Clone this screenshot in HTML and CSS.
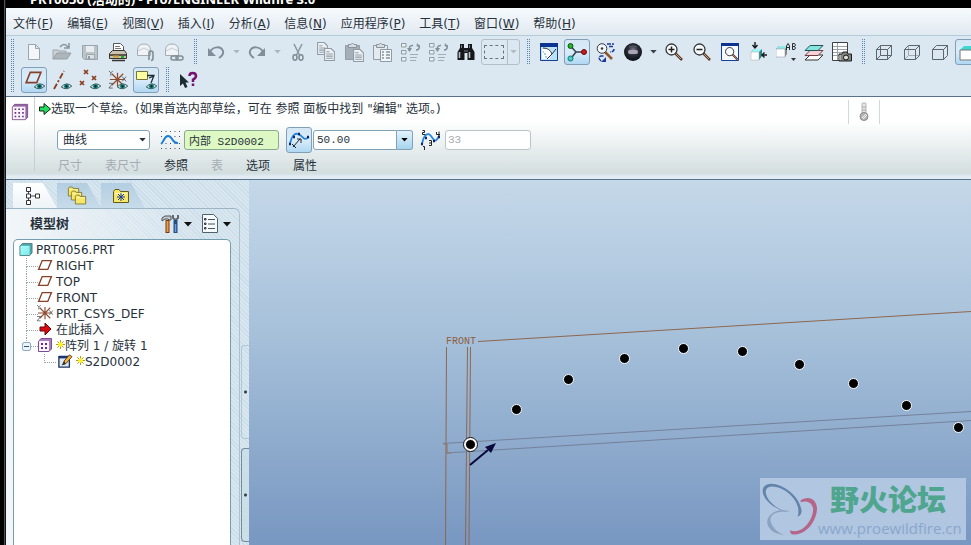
FILE: index.html
```html
<!DOCTYPE html>
<html lang="zh-CN">
<head>
<meta charset="utf-8">
<title>PRT0056 (活动的) - Pro/ENGINEER Wildfire 3.0</title>
<link rel="stylesheet" href="styles.css">
</head>
<body>
<svg class="defs" aria-hidden="true">
  <defs>
    <linearGradient id="blueGlass" x1="0" y1="0" x2="1" y2="1"><stop offset="0" stop-color="#aff"/><stop offset="1" stop-color="#7ee6e6"/></linearGradient>
    <radialGradient id="ball" cx=".5" cy=".4" r=".6"><stop offset="0" stop-color="#8a8494"/><stop offset=".45" stop-color="#2b303b"/><stop offset="1" stop-color="#0a0e12"/></radialGradient>
    <symbol id="eye" viewBox="0 0 12 8"><path d="M0 4.500Q6-2 12 3.500Q6 9 0 4.500Z" fill="#cfe4e4" stroke="#26484a" stroke-width="1"/><circle cx="6" cy="3.800" r="2.800" fill="#147a76"/><circle cx="6" cy="3.800" r="1.200" fill="#022"/></symbol>
    <symbol id="tri" viewBox="0 0 8 5"><path d="M0 0H8L4 4.500Z" fill="currentColor"/></symbol>
    <symbol id="page" viewBox="0 0 20 20"><path d="M4.500 2.500H11.500L15.500 6.500V17.500H4.500Z M11.500 2.500V6.500H15.500" fill="#f4f7fa" stroke="#9ba5ae"/></symbol>
    <symbol id="open" viewBox="0 0 20 20"><path d="M1 17V8H6L7 9H14V11" fill="#ccd2d6" stroke="#9ba5ae"/><path d="M1 17L5 11H19L15 17Z" fill="#aeb6bc" stroke="#959fa6"/><path d="M8 5Q12 0 16 5M17 1V6H12" fill="none" stroke="#89949c" stroke-width="1.500"/></symbol>
    <symbol id="save" viewBox="0 0 20 20"><path d="M2.500 3.500H17.500V17.500H4.500L2.500 15.500Z" fill="#bcc4ca" stroke="#9aa4ab"/><path d="M6 4H14V10H6Z" fill="#e8edf0"/><path d="M6.500 12.500H14.500V17H6.500Z" fill="#dde3e7" stroke="#9aa4ab"/><path d="M8 14H10V17H8Z" fill="#929ca3"/></symbol>
    <symbol id="print" viewBox="0 0 20 20"><path d="M5.500 9V1.500H12.500L15.500 4.500V9" fill="#fff" stroke="#555"/><path d="M7 4.500H12M7 6.500H13" stroke="#777"/><path d="M1.500 11.500L4.500 8.500H16.500L18.500 11.500V16.500H1.500Z" fill="#c9c3b4" stroke="#38332d"/><path d="M2 13H18M4 18.500H17" stroke="#38332d" stroke-width="1.500"/><path d="M13 14H16V16H13Z" fill="#2a2"/><path d="M5 14.500H11" stroke="#c8a23a" stroke-width="2"/></symbol>
    <symbol id="mail" viewBox="0 0 20 20"><path d="M1.500 13.500V8Q2 2 8 2Q14 2 14.500 8V13.500Z" fill="#f1f4f7" stroke="#a4adb4"/><path d="M2 9L8 6L14 9" fill="none" stroke="#c4cbd0"/></symbol>
    <symbol id="undo" viewBox="0 0 20 20"><path d="M4 10C7 4 15 4 17 9Q18 13 13 16" fill="none" stroke="#818d98" stroke-width="2"/><path d="M2 6V14H10Z" fill="#818d98"/></symbol>
    <symbol id="cut" viewBox="0 0 20 20"><path d="M6 2L11.500 13M14 2L8.500 13" stroke="#8d98a1" stroke-width="1.600"/><ellipse cx="7" cy="15.500" rx="2" ry="2.700" fill="none" stroke="#808b93" stroke-width="1.500"/><ellipse cx="13" cy="15.500" rx="2" ry="2.700" fill="none" stroke="#808b93" stroke-width="1.500"/></symbol>
    <symbol id="doc" viewBox="0 0 12 12"><path d="M1.500 .500H7.500L10.500 3.500V11.500H1.500Z" fill="#eef2f5" stroke="#8f9ba4"/><path d="M3 3.500H6M3 5.500H9M3 7.500H9M3 9.500H9" stroke="#8f9ba4"/></symbol>
    <symbol id="copy" viewBox="0 0 20 20"><use href="#doc" x="0" y="0" width="13" height="13"/><use href="#doc" x="7" y="6" width="13" height="13"/></symbol>
    <symbol id="board" viewBox="0 0 20 20"><path d="M1.500 3.500H15.500V17.500H1.500Z" fill="currentColor" stroke="#929da5"/><path d="M4.500 5.500V2.500H7Q8.500-.500 10 2.500H12.500V5.500Z" fill="#d7dde2" stroke="#89949c"/></symbol>
    <symbol id="paste" viewBox="0 0 20 20"><use href="#board" width="20" height="20" color="#a5afb7"/><use href="#doc" x="8" y="7" width="13" height="13"/></symbol>
    <symbol id="pastes" viewBox="0 0 20 20"><use href="#board" width="20" height="20" color="#e3eaf0"/><path d="M8.500 7.500H19.500V19.500H8.500Z" fill="#f3f6f8" stroke="#8f9ba4"/><path d="M10 10H12M10 13H12M10 16H12M14 10H18M14 13H18M14 16H18" stroke="#86929b" stroke-width="1.500"/></symbol>
    <symbol id="regen" viewBox="0 0 20 20"><path d="M1.500 1.500H6V5H1.500ZM1.500 8.500H6V12H1.500ZM1.500 15.500H6V19H1.500Z" fill="#e9eef2" stroke="#909ba3"/><path d="M10 12.500H18M10 15.500H17M10 18.500H16" stroke="#a2acb4"/><path d="M9.500 9Q8.500 3 13 3.500M19 3Q20 8 16 8" fill="none" stroke="#858f98" stroke-width="1.500"/><path d="M7 6H12L9.500 10ZM16.500 4L21 6L17 1Z" fill="#858f98"/></symbol>
    <symbol id="find" viewBox="0 0 20 20"><path d="M4 2H8V6H12V2H16V6L18.500 10V18H11.500V11H8.500V18H1.500V10L4 6Z" fill="#15181b"/><path d="M3.500 10V16M13.500 10V16" stroke="#b8bec4" stroke-width="1.600"/><path d="M5.500 3V6M13.500 3V6M8 9H12" stroke="#767e85"/></symbol>
    <symbol id="repaint" viewBox="0 0 20 20"><path d="M1.500 1.500H18.500V18.500H1.500Z" fill="#b9e2f6" stroke="#173f94"/><path d="M1 1H19V5H1Z" fill="#0d3390"/><path d="M3 7L9 6L14 11L10 17L3 17Z" fill="#fff"/><path d="M4 6Q11 6 13 12M8 17L13 12L17 7" fill="none" stroke="#2b3136"/><path d="M5 12H7M6 15H8M4 10H5" stroke="#58a2ce"/></symbol>
    <symbol id="spin" viewBox="0 0 20 20"><path d="M3.500 4L9 10L3.500 17M9 10H17" fill="none" stroke="#35414c" stroke-width="1.500"/><circle cx="3.500" cy="4" r="2.500" fill="#25b327" stroke="#115813"/><circle cx="3.500" cy="16.500" r="2.500" fill="#45cfc6" stroke="#167670"/><circle cx="17" cy="10" r="2.500" fill="#ca1b20" stroke="#6b080b"/></symbol>
    <symbol id="orient" viewBox="0 0 20 20"><path d="M10 10L17 17" stroke="#91582e" stroke-width="2.500"/><circle cx="7" cy="6.500" r="4.800" fill="#f0f6fa" stroke="#343a40"/><circle cx="7" cy="6.500" r="1.200" fill="#333"/><path d="M12 2H19M14 4.500H19M19 7Q19 10 15 10M6 19Q2 15 6 14H9" fill="none" stroke="#1b3b96" stroke-width="1.500" stroke-dasharray="4 1"/><path d="M6 20H11V15Z" fill="#1b3b96"/></symbol>
    <symbol id="sphere" viewBox="0 0 20 20"><circle cx="10" cy="10" r="9" fill="url(#ball)"/><rect x="5" y="8" width="10" height="4" rx="2" fill="#aaa6b5"/><path d="M6 5Q10 3 14 5" stroke="#586169" fill="none"/></symbol>
    <symbol id="lens" viewBox="0 0 20 20"><path d="M11 11L18 18" stroke="#543829" stroke-width="2.500"/><path d="M11 11L17 17" stroke="#d49a77"/><circle cx="7.500" cy="7.500" r="5.500" fill="#f8fbfc" stroke="#33383c" stroke-width="1.300"/></symbol>
    <symbol id="zin" viewBox="0 0 20 20"><use href="#lens" width="20" height="20"/><path d="M4.500 7.500H10.500M7.500 4.500V10.500" stroke="#222" stroke-width="1.500"/></symbol>
    <symbol id="zout" viewBox="0 0 20 20"><use href="#lens" width="20" height="20"/><path d="M4.500 7.500H10.500" stroke="#222" stroke-width="1.500"/></symbol>
    <symbol id="refit" viewBox="0 0 20 20"><path d="M1.500 1.500H18.500V18.500H1.500Z" fill="#f5faff" stroke="#173f94"/><path d="M1 1H19V4H1Z" fill="#0d3390"/><use href="#lens" x="4" y="4" width="15" height="15"/></symbol>
    <symbol id="viewcube" viewBox="0 0 20 20"><path d="M3 10L6 7H14V14L11 18H3Z" fill="#2a8785"/><path d="M3 10L6 7H14L11 10Z" fill="#9ff5f5"/><path d="M3 10H11V18H3Z" fill="#fff" stroke="#aaa" stroke-width=".500"/><path d="M7 0V5M4.500 3L7 6L9.500 3M19 13H14M16.500 10.500L14 13L16.500 15.500" fill="none" stroke="#16191b" stroke-width="1.400"/></symbol>
    <symbol id="saved" viewBox="0 0 20 20"><path d="M0 7L3 4H11V12L9 15H0Z" fill="#888"/><path d="M0 7L3 4H11L9 7Z" fill="#91e8e8"/><path d="M0 7H9V15H0Z" fill="#fff" stroke="#889" stroke-width=".500"/><path d="M10.500 8V4L12 1.500L13.500 4V8M10.500 5.500H13.500M16.500 1.500H18.500L19.500 3L18.500 4.500H16.500ZM16.500 4.500H18.500L19.500 6L18.500 7.500H16.500Z" fill="none" stroke="#252a2e"/><path d="M15 16H20L17.500 19Z" fill="#333"/></symbol>
    <symbol id="layers" viewBox="0 0 20 20"><path d="M1 18L6 13H19L14 18Z" fill="#fff" stroke="#333"/><path d="M1 13.500L6 8.500H19L14 13.500Z" fill="#f6d1d7" stroke="#703c48"/><path d="M1 8.500L6 3.500H19L14 8.500Z" fill="#86e6df" stroke="#205553"/></symbol>
    <symbol id="report" viewBox="0 0 20 20"><path d="M.500 .500H15.500V18.500H.500Z" fill="#fff" stroke="#3c4146"/><path d="M1 4.500H15M1 7.500H15M1 10.500H15M1 13.500H15M5.500 1V18" stroke="#9ba1a6"/><path d="M7 12H10L11 10H15L16 12H19.500V19H7Z" fill="#82857f" stroke="#1e2020"/><circle cx="14" cy="15.500" r="2.500" fill="#ddd" stroke="#111"/><path d="M8 13V18" stroke="#ddd"/></symbol>
    <symbol id="wire" viewBox="0 0 20 20"><path d="M2.500 7.500H13.500V17.500H2.500ZM2.500 7.500L6.500 3.500H17.500V13.500L13.500 17.500M13.500 7.500L17.500 3.500M6.500 3.500V13.500H17.500M2.500 17.500L6.500 13.500" fill="none" stroke="#5d656d"/></symbol>
    <symbol id="hidden" viewBox="0 0 20 20"><path d="M6.500 4V13.500H17M3 17L6.500 13.500" fill="none" stroke="#a2abb2"/><path d="M2.500 7.500H13.500V17.500H2.500ZM2.500 7.500L6.500 3.500H17.500V13.500L13.500 17.500M13.500 7.500L17.500 3.500" fill="none" stroke="#5d656d"/></symbol>
    <symbol id="nohid" viewBox="0 0 20 20"><path d="M2.500 7.500H13.500V17.500H2.500ZM2.500 7.500L6.500 3.500H17.500V13.500L13.500 17.500M13.500 7.500L17.500 3.500" fill="none" stroke="#5d656d"/></symbol>
    <symbol id="shade" viewBox="0 0 20 20"><path d="M2 8L6 4H18L14 8Z" fill="#42d6d1"/><path d="M2 8H14V18H2Z" fill="#fff" stroke="#777"/></symbol>
    <symbol id="plane" viewBox="0 0 20 14"><path d="M6.500 1.500H18L13.500 12.500H2Z" fill="none" stroke="#854129" stroke-width="1.700"/></symbol>
    <symbol id="csys" viewBox="0 0 20 20"><path d="M10 3V17M2 10H18M4 4L16 16M16 4L4 16" stroke="#8b4d2d" stroke-width="1.300"/><path d="M1 1L3 3L5 1M3 3V6M15 7L19 12M19 7L15 12M1 14H5L1 19H5" fill="none" stroke="#5e6468"/></symbol>
    <symbol id="pattern" viewBox="0 0 20 20"><path d="M1.500 4.500L4 1.500H18.500V16L16 18.500H1.500Z" fill="#9366a5" stroke="#7c4e8f"/><path d="M2 4H16V18H2Z" fill="#fbf2ff"/><path d="M4 7H15M4 11H15M4 15H15" stroke="#61347a" stroke-width="1.800" stroke-dasharray="1.800 2.400"/></symbol>
    <symbol id="pattern4" viewBox="0 0 14 14"><path d="M.500 3.500L3 .500H13.500V11L11 13.500H.500Z" fill="#a87fb8" stroke="#7c4e8f"/><path d="M1 3H11V13H1Z" fill="#fbf2ff"/><path d="M3 6H5M7 6H9M3 10H5M7 10H9" stroke="#61347a" stroke-width="2"/></symbol>
    <symbol id="curve" viewBox="0 0 20 20"><path d="M1 1.500H20M1 6.500H20M1 13.500H20M1 18.500H20" stroke="#4a4e62" stroke-dasharray="1 3.500"/><path d="M1 14C4 12 4 6 8 6C13 6 12 14 18 13" fill="none" stroke="#1e7fd3" stroke-width="2"/></symbol>
    <symbol id="folder" viewBox="0 0 18 16"><path d="M1.500 14.500V3.500L3 1.500H7L8.500 3.500H16.500V14.500Z" fill="#f6e767" stroke="#665a18"/><path d="M3 5.500H15" stroke="#fffbc4"/></symbol>
    <symbol id="star" viewBox="0 0 10 10"><path d="M5 0V10M0 5H10M1.500 1.500L8.500 8.500M8.500 1.500L1.500 8.500" stroke="#a39400" stroke-width="1"/><circle cx="5" cy="5" r="2.500" fill="#ffef29"/></symbol>
  </defs>
</svg>

<div class="app">
  <header class="titlebar"><h1>PRT0056 (活动的) - Pro/ENGINEER Wildfire 3.0</h1></header>

  <nav class="menubar" aria-label="主菜单">
    <button>文件(<u>F</u>)</button><button>编辑(<u>E</u>)</button><button>视图(<u>V</u>)</button><button>插入(<u>I</u>)</button><button>分析(<u>A</u>)</button><button>信息(<u>N</u>)</button><button>应用程序(<u>P</u>)</button><button>工具(<u>T</u>)</button><button>窗口(<u>W</u>)</button><button>帮助(<u>H</u>)</button>
  </nav>

  <div class="toolbar">
    <i class="grip tall"></i>
    <div class="rows">
      <div class="row">
        <button class="tool" aria-label="新建"><svg><use href="#page"/></svg></button>
        <button class="tool" aria-label="打开"><svg><use href="#open"/></svg></button>
        <button class="tool" aria-label="保存"><svg><use href="#save"/></svg></button>
        <button class="tool" aria-label="打印"><svg><use href="#print"/></svg></button>
        <button class="tool" aria-label="发送邮件"><svg viewBox="0 0 20 20"><use href="#mail" width="20" height="20"/><path d="M13 18V11Q13 9 15 9Q17 9 17 11V16Q17 18.500 15 18.500" fill="none" stroke="#828d95" stroke-width="1.600"/></svg></button>
        <button class="tool" aria-label="发送链接"><svg viewBox="0 0 20 20"><use href="#mail" width="20" height="20"/><rect x="7" y="14" width="7" height="4" rx="2" fill="none" stroke="#828d95" stroke-width="1.500"/><rect x="12" y="14" width="7" height="4" rx="2" fill="none" stroke="#828d95" stroke-width="1.500"/></svg></button>
        <i class="grip"></i>
        <button class="tool" aria-label="撤消"><svg><use href="#undo"/></svg></button>
        <button class="drop dim" aria-label="撤消列表"><svg><use href="#tri"/></svg></button>
        <button class="tool flip" aria-label="重做"><svg><use href="#undo"/></svg></button>
        <button class="drop dim" aria-label="重做列表"><svg><use href="#tri"/></svg></button>
        <button class="tool" aria-label="剪切"><svg><use href="#cut"/></svg></button>
        <button class="tool" aria-label="复制"><svg><use href="#copy"/></svg></button>
        <button class="tool" aria-label="粘贴"><svg><use href="#paste"/></svg></button>
        <button class="tool" aria-label="选择性粘贴"><svg><use href="#pastes"/></svg></button>
        <button class="tool" aria-label="再生"><svg><use href="#regen"/></svg></button>
        <button class="tool" aria-label="再生管理器"><svg><use href="#regen"/></svg></button>
        <button class="tool" aria-label="查找"><svg><use href="#find"/></svg></button>
        <button class="pick" aria-label="选取框"><span class="marquee"></span><span class="arrow"><svg><use href="#tri"/></svg></span></button>
        <i class="grip"></i>
        <button class="tool" aria-label="重画"><svg><use href="#repaint"/></svg></button>
        <button class="tool on" aria-label="旋转中心"><svg><use href="#spin"/></svg></button>
        <button class="tool" aria-label="定向模式"><svg><use href="#orient"/></svg></button>
        <button class="tool" aria-label="外观库"><svg><use href="#sphere"/></svg></button>
        <button class="drop" aria-label="外观列表"><svg><use href="#tri"/></svg></button>
        <button class="tool" aria-label="放大"><svg><use href="#zin"/></svg></button>
        <button class="tool" aria-label="缩小"><svg><use href="#zout"/></svg></button>
        <button class="tool" aria-label="重新调整"><svg><use href="#refit"/></svg></button>
        <button class="tool" aria-label="重定向"><svg><use href="#viewcube"/></svg></button>
        <button class="tool" aria-label="已保存视图"><svg><use href="#saved"/></svg></button>
        <button class="tool" aria-label="层"><svg><use href="#layers"/></svg></button>
        <button class="tool" aria-label="视图管理器"><svg><use href="#report"/></svg></button>
        <i class="grip"></i>
        <button class="tool" aria-label="线框"><svg><use href="#wire"/></svg></button>
        <button class="tool" aria-label="隐藏线"><svg><use href="#hidden"/></svg></button>
        <button class="tool" aria-label="无隐藏线"><svg><use href="#nohid"/></svg></button>
        <button class="tool on" aria-label="着色"><svg><use href="#shade"/></svg></button>
      </div>
      <div class="row">
        <button class="tool on" aria-label="基准平面"><svg viewBox="0 0 20 20"><use href="#plane" y="1" width="19" height="13"/><use href="#eye" x="10" y="13" width="11" height="7"/></svg></button>
        <button class="tool" aria-label="基准轴"><svg viewBox="0 0 20 20"><path d="M2 19L12 1" stroke="#8a3d21" stroke-width="1.800" stroke-dasharray="6 2 2 2"/><use href="#eye" x="9" y="13" width="11" height="7"/></svg></button>
        <button class="tool" aria-label="基准点"><svg viewBox="0 0 20 20"><path d="M4 0L8 4M8 0L4 4M0 11L4 15M4 11L0 15M12 6L16 10M16 6L12 10" stroke="#8a3d21" stroke-width="1.700"/><use href="#eye" x="10" y="13" width="11" height="7"/></svg></button>
        <button class="tool" aria-label="坐标系"><svg viewBox="0 0 20 20"><use href="#csys" width="19" height="19"/><use href="#eye" x="9" y="13" width="11" height="7"/></svg></button>
        <button class="tool on" aria-label="注释"><svg viewBox="0 0 20 20"><path d="M.500 1.500H11.500V9.500H.500Z" fill="#ffffa0" stroke="#77723e"/><path d="M11 5.500H18L15 13M13 8L18 6" fill="none" stroke="#222b30" stroke-width="1.300"/><use href="#eye" x="10" y="13" width="11" height="7"/></svg></button>
        <i class="grip"></i>
        <button class="tool" aria-label="帮助"><svg viewBox="0 0 20 20"><path d="M2 4V16L5 13.500L7 18L9.500 17L7.500 12.500H11Z" fill="#1b2c34"/><path d="M11.500 6Q11.500 3 14.500 3Q18 3 18 6Q18 8 15 9.500V12M15 13.500V16" fill="none" stroke="#75126f" stroke-width="2.500"/></svg></button>
      </div>
    </div>
  </div>

  <section class="dashboard">
    <div class="feature"><svg><use href="#pattern"/></svg></div>
    <div class="dash">
      <p class="message"><svg viewBox="0 0 12 12"><path d="M.500 4H5V.500L11.500 6L5 11.500V8H.500Z" fill="#24dc60" stroke="#0c2915"/></svg>选取一个草绘。(如果首选内部草绘，可在 参照 面板中找到 "编辑" 选项。)</p>
      <div class="fields">
        <div class="select"><select aria-label="阵列类型"><option>曲线</option></select><svg><use href="#tri"/></svg></div>
        <svg class="fig"><use href="#curve"/></svg>
        <input class="ref" aria-label="草绘参照" value="内部 S2D0002">
        <button class="tool on" aria-label="成员间距"><svg viewBox="0 0 20 20"><path d="M1 14C3 4 7 2 11 5S15 11 20 7" fill="none" stroke="#2587dc" stroke-width="1.800"/><path d="M0 14H2M4 7H6M9 4H11M18 7H20" stroke="#15236b" stroke-width="2.500"/><path d="M4 17L11 9M8 9H12V13M3 14L7 18" fill="none" stroke="#222"/></svg></button>
        <div class="combo"><input aria-label="间距" value="50.00"><button aria-label="间距列表"><svg><use href="#tri"/></svg></button></div>
        <svg class="fig" viewBox="0 0 20 20"><path d="M1 14C3 4 7 2 10 6S14 14 18 6" fill="none" stroke="#2587dc" stroke-width="1.800"/><path d="M0 14H2M4 8H6M12 11H14M17 7H19" stroke="#15236b" stroke-width="2.500"/><path d="M1.500 .500H3.500V2.500H1.500V4.500H4M2 16.500H3.500V20M8 10.500H10.500V15.500H8M8 13H10M15.500 2V4.500H19M18 1.500V7" fill="none" stroke="#222"/></svg>
        <input class="count" aria-label="成员数" value="33" disabled>
      </div>
      <div class="slide">
        <button disabled>尺寸</button><button disabled>表尺寸</button><button>参照</button><button disabled>表</button><button>选项</button><button>属性</button>
      </div>
    </div>
    <div class="thermo"><svg viewBox="0 0 12 20"><path d="M4 1.500Q6 0 8 1.500V11H4Z" fill="#e5e5e5" stroke="#b5b5b5"/><path d="M4 5H8M4 8H8" stroke="#aaa"/><circle cx="6" cy="14.500" r="4" fill="#b7b7b7" stroke="#888"/><path d="M4 16L8 12M5 17L9 13" stroke="#eee"/></svg></div>
  </section>

  <main class="work">
    <aside class="navigator">
      <div class="tabs">
        <button class="tab cur" aria-label="模型树"><svg viewBox="0 0 18 20"><path d="M4.500 5V15M6 10H12" stroke="#444"/><path d="M2.500 1.500H6.500V5.500H2.500ZM2.500 8H6.500V12H2.500ZM2.500 14.500H6.500V18.500H2.500ZM11.500 8H15.500V12H11.500Z" fill="#fff" stroke="#333"/></svg></button>
        <button class="tab" aria-label="文件夹浏览器"><svg viewBox="0 0 20 20"><use href="#folder" width="13" height="11"/><use href="#folder" x="3" y="4" width="13" height="11"/><use href="#folder" x="7" y="8" width="13" height="11"/></svg></button>
        <button class="tab" aria-label="收藏夹"><svg viewBox="0 0 18 16"><use href="#folder" width="18" height="16"/><path d="M9 5V13M5 9H13M6 6L12 12M12 6L6 12" stroke="#1d3f9c"/></svg></button>
      </div>
      <div class="pane">
        <div class="head">
          <h2>模型树</h2>
          <button aria-label="设置"><svg viewBox="0 0 20 20"><path d="M1 7V4L4 2H10V6H8L7 5H4Z" fill="#c4cacd" stroke="#4d5459"/><path d="M6.500 6V19" stroke="#7a3b0f" stroke-width="4"/><path d="M6.500 7V18" stroke="#ef9a42" stroke-width="2"/><path d="M12 1V4L14.500 6L17 4V1" fill="none" stroke="#60696f" stroke-width="2"/><path d="M14.500 6V19" stroke="#244c86" stroke-width="4"/><path d="M14.500 10V18" stroke="#6d9ddb" stroke-width="1.500"/></svg><svg class="caret"><use href="#tri"/></svg></button>
          <button aria-label="显示"><svg viewBox="0 0 20 20"><path d="M2.500 .500H13.500L17.500 4.500V18.500H2.500Z" fill="#f5fafd" stroke="#52616c"/><path d="M8 5.500H15M8 10H15M8 14.500H15" stroke="#49545c"/><path d="M4.500 4.500H6V6H4.500ZM4.500 9H6V10.500H4.500ZM4.500 13.500H6V15H4.500Z" fill="none" stroke="#333"/></svg><svg class="caret"><use href="#tri"/></svg></button>
        </div>
        <ul class="tree">
          <li class="root"><svg viewBox="0 0 14 14"><path d="M.500 3.500L3 .500H13.500V10.500L11 13.500H.500Z" fill="#4ba5a8" stroke="#4f7b80"/><path d="M1 3H11V13H1Z" fill="url(#blueGlass)"/></svg>PRT0056.PRT
            <ul>
              <li><svg><use href="#plane"/></svg>RIGHT</li>
              <li><svg><use href="#plane"/></svg>TOP</li>
              <li><svg><use href="#plane"/></svg>FRONT</li>
              <li><svg viewBox="2 2 16 16"><use href="#csys" width="20" height="20"/></svg>PRT_CSYS_DEF</li>
              <li><svg viewBox="0 0 16 14"><path d="M3 5H8V1L14 7L8 13V9H3Z" fill="#d80d12" stroke="#64080b"/></svg>在此插入</li>
              <li class="last"><button class="fold" aria-label="折叠"></button><svg><use href="#pattern4"/></svg><svg class="star"><use href="#star"/></svg>阵列 1 / 旋转 1
                <ul><li class="last"><svg viewBox="0 0 16 16"><path d="M1 3H13V15H1Z" fill="#dce9f0" stroke="#1f315e" stroke-width="1.500"/><path d="M1 2H13V5H1Z" fill="#173472"/><path d="M6 12L7 8L13 1L16 3L9 11Z" fill="#f3b640" stroke="#533015"/><path d="M4 13L7 8L9 11Z" fill="#333"/></svg><svg class="star"><use href="#star"/></svg>S2D0002</li></ul>
              </li>
            </ul>
          </li>
        </ul>
      </div>
      <div class="sashes"><i></i><i class="dark"></i></div>
    </aside>

    <div class="canvas">
      <svg class="model" aria-label="图形窗口">
        <g transform="translate(-249 -180)" fill="none">
          <path d="M478 341.500L971 311.500M446.500 347L445.500 545M467.500 347L465.500 545M470.500 347L469 545" stroke="#8e674f"/>
          <path d="M443 443.500L971 411.500M446 453L971 420.500" stroke="#75819b"/>
          <path d="M443 444H447V453H451" stroke="#94735f"/>
          <text x="446" y="344" class="label">FRONT</text>
          <path d="M470 465L488 450" stroke="#09083c" stroke-width="2"/><path d="M496 443L485 447L491 453Z" fill="#09083c"/>
          <circle cx="470.500" cy="444.500" r="7" fill="#fff" stroke="#111"/>
          <g fill="#000" stroke="#fff">
            <circle cx="470.500" cy="444.500" r="5"/><circle cx="516.500" cy="409.500" r="5"/><circle cx="568.500" cy="379.500" r="5"/><circle cx="624.500" cy="358.500" r="5"/><circle cx="683.500" cy="348.500" r="5"/><circle cx="742.500" cy="351.500" r="5"/><circle cx="799.500" cy="364.500" r="5"/><circle cx="853.500" cy="383.500" r="5"/><circle cx="906.500" cy="405.500" r="5"/><circle cx="958.500" cy="427.500" r="5"/>
          </g>
        </g>
      </svg>
      <div class="mark">
        <svg viewBox="0 0 60 62"><g stroke="none"><path d="M28 34C9 30-1 15 4 8C12-2 41 13 43 33Q43 37 39 39Q42 28 33 18C24 8 8 4 6 12C5 19 14 30 28 34Z" fill="#6384aa"/><path d="M42 22C50 17 58 20 59 30C59 44 46 60 33 57Q31 56 31 53C44 58 55 42 55 31C54 24 48 22 42 24Z" fill="#b56688"/><path d="M31 34C19 32 9 36 11 44Q14 54 25 58C7 56 4 43 11 37C17 31 26 31 31 34Z" fill="#8ba2c1"/></g></svg>
        <div><strong>野火论坛</strong><span>www.proewildfire.cn</span></div>
      </div>
    </div>
  </main>
</div>
</body>
</html>
```
FILE: styles.css
```css
* { box-sizing: border-box; }
body {
  margin: 0;
  background: #000;
  color: #27313b;
  font: 12px/16px "DejaVu Sans", "Noto Sans CJK SC", sans-serif;
}
button, input, select { font: inherit; color: inherit; margin: 0; padding: 0; border: 0; background: none; }
h1, h2, p, ul { margin: 0; padding: 0; }
ul { list-style: none; }
svg { flex: none; }
.defs { position: absolute; width: 0; height: 0; }

.app {
  height: 100vh;
  padding-left: 6px;
  display: flex;
  flex-direction: column;
  overflow: hidden;
  background: linear-gradient(90deg, #000 4px, #4c5058 4px, #4c5058 5px, #10141a 5px);
}
.titlebar { height: 8px; flex: none; background: #000; display: flex; align-items: flex-end; padding: 0 24px; overflow: hidden; }
.titlebar h1 { color: #fff; font: bold 13px/14px "Noto Sans", "Noto Sans CJK SC", sans-serif; padding-bottom: 2px; white-space: nowrap; }

.menubar {
  flex: none;
  height: 28px;
  display: flex;
  align-items: center;
  padding-top: 5px;
  background: linear-gradient(#f6fafd, #e1e9f1);
  border-bottom: 1px solid #b4cbdc;
}
.menubar button { padding: 0 7px; white-space: nowrap; }

.toolbar { flex: none; display: flex; height: 61px; background: #dce8f1; border-bottom: 1px solid #56728c; overflow: hidden; }
.rows { display: flex; flex-direction: column; padding-top: 2px; }
.row { display: flex; align-items: center; height: 28px; }
.tool { flex: none; width: 26px; height: 26px; margin: 0 1px; border: 1px solid transparent; border-radius: 3px; display: grid; place-items: center; }
.tool svg { width: 20px; height: 20px; overflow: visible; }
.tool.on { border-color: #829fb8; background: linear-gradient(#d5e6f4, #d9ecfa 50%, #b0d7f3); }
.flip svg { transform: scaleX(-1); }
.grip { flex: none; width: 14px; height: 26px; background: conic-gradient(#5f84b2 25%, transparent 0) 0 0 / 2px 2px content-box; padding: 0 5px; }
.grip.tall { height: 54px; margin-top: 3px; padding: 0 6px 0 4px; }
.drop { flex: none; width: 13px; display: grid; place-items: center; color: #36424d; }
.drop svg { width: 7px; height: 4px; }
.dim { color: #a9b5c0; }
.pick { flex: none; width: 39px; height: 26px; margin: 0 1px; border: 1px solid #b3bfca; border-radius: 3px; display: flex; align-items: center; color: #b0bac3; }
.marquee { width: 20px; height: 14px; margin: 0 3px 0 2px; border: 1px dashed #68737d; }
.arrow { flex: 1; height: 24px; border-left: 1px solid #b3bfca; display: grid; place-items: center; }
.arrow svg { width: 7px; height: 4px; }

.dashboard { flex: none; height: 83px; display: flex; background: linear-gradient(#fff 30%, #d3dedf 93%, #d5e2e8 94%, #e2ecf2 97%); border-bottom: 1px solid #58748c; }
.feature { width: 29px; height: 74px; padding: 5px; border-right: 1px solid #c6cfd4; }
.feature svg { width: 18px; height: 20px; }
.dash { flex: 1; }
.message { display: flex; align-items: center; height: 24px; padding-left: 4px; white-space: pre; font-family: "DejaVu Sans", "Noto Sans CJK SC", sans-serif; }
.message svg { width: 12px; height: 12px; }
.fields { display: flex; align-items: center; height: 38px; padding-left: 22px; }
.fields input, .fields select { height: 20px; border: 1px solid #7fa2b8; border-radius: 3px; background: #fff; padding: 0 4px; min-width: 0; }
.fields input { font: 11px/16px "Liberation Mono", "Noto Sans CJK SC", monospace; }
.select { display: grid; width: 93px; align-items: center; }
.select select { grid-area: 1 / 1; appearance: none; width: 100%; padding-left: 5px; }
.select svg { grid-area: 1 / 1; justify-self: end; margin-right: 4px; width: 7px; height: 4px; pointer-events: none; }
.fig { width: 20px; height: 20px; margin: 0 4px 0 10px; overflow: visible; }
.fields .ref { width: 95px; background: #ddf8c3; border-color: #86ab90; }
.fields .tool { margin: 0 1px 0 7px; }
.combo { display: flex; width: 100px; }
.combo input { flex: 1; border-radius: 3px 0 0 3px; padding-left: 3px; }
.combo button { width: 16px; border: 1px solid #7fa2b8; border-left: 0; border-radius: 0 3px 3px 0; background: linear-gradient(#e3f3fd, #a7d3ed); display: grid; place-items: center; color: #000; }
.combo svg { width: 7px; height: 4px; }
.combo + .fig { margin-left: 8px; }
.fields .count { width: 86px; color: #a5abb0; border-color: #b9c5c9; padding-left: 2px; }
.slide { display: flex; gap: 23px; padding: 0 23px; height: 14px; align-items: center; }
.slide button:disabled { color: #a3adb2; }
.thermo { width: 32px; height: 24px; margin: 3px 91px 0 0; border: solid #d4d8da; border-width: 0 1px; display: grid; place-items: center; }
.thermo svg { width: 12px; height: 20px; }

.work { flex: 1; display: flex; min-height: 0; }
.navigator {
  flex: none;
  width: 243px;
  display: grid;
  grid-template: 28px 1fr / 1fr 9px;
  background: repeating-linear-gradient(45deg, #cbdde9 0 1px, #d8e6ef 1px 3px);
}
.tabs { grid-column: 1 / 3; display: flex; padding: 3px 0 0 7px; }
.tab { width: 44px; height: 25px; padding-right: 4px; display: grid; place-items: center; background: linear-gradient(#b3cee2, #c8dce9); clip-path: polygon(0 0, 30px 0, 100% 100%, 0 100%); }
.tab.cur { background: linear-gradient(#fff, #edf3f7); }
.tab svg { width: 20px; height: 20px; }
.tab:last-child svg { width: 18px; height: 16px; }
.pane { grid-area: 2 / 1; display: flex; flex-direction: column; padding-right: 8px; border-top: 1px solid #9db4c5; border-right: 1px solid #abc3d1; border-top-right-radius: 6px; background: linear-gradient(90deg, #f2f6f9, transparent 85%); }
.head { flex: none; height: 30px; display: flex; align-items: center; }
.head h2 { flex: 1; padding-left: 24px; font-size: 13px; line-height: 16px; }
.head button { display: flex; align-items: center; gap: 3px; margin-left: 8px; color: #111; }
.head svg { width: 20px; height: 20px; }
.head .caret { width: 8px; height: 5px; }
.tree { flex: 1; margin-left: 7px; padding: 2px 5px; background: #fff; border: 1px solid #739eae; border-bottom: 0; border-radius: 5px 5px 0 0; white-space: nowrap; }
.tree li { position: relative; line-height: 16px; }
.tree li > svg { display: inline-block; width: 16px; height: 14px; margin-right: 3px; vertical-align: -2px; overflow: visible; }
.tree .root > svg { width: 14px; height: 13px; }
.tree li > .star { width: 9px; height: 9px; margin: 0; vertical-align: 1px; }
.tree .root > ul > li { padding-left: 18px; }
.tree .last li { padding-left: 20px; }
.tree ul li::before { content: ""; position: absolute; left: 7px; top: 0; width: 11px; height: 8px; border: dotted #9aa4ab; border-width: 0 0 1px 1px; }
.tree ul li:not(.last)::after { content: ""; position: absolute; left: 7px; top: 8px; height: 8px; border-left: 1px dotted #9aa4ab; }
.fold { position: absolute; z-index: 1; left: 3px; top: 4px; width: 9px; height: 9px; border: 1px solid #8fabc0; border-radius: 2px; background: linear-gradient(#36526a, #36526a) center / 5px 1px no-repeat #eaf4fb; }
.sashes { grid-area: 2 / 2; display: flex; flex-direction: column; gap: 9px; padding: 137px 0 3px 1px; }
.sashes i { flex: 1; border: 1px solid #b0c8d4; border-right: 0; border-radius: 4px 0 0 4px; background: radial-gradient(circle, #354149 1px, transparent 2px); }
.sashes .dark { border-color: #748b9b; background-color: #cbdfe9; }

.canvas { position: relative; flex: 1; min-width: 0; background: linear-gradient(#c5d8e9, #a8c2db 40%, #7897c1); overflow: hidden; }
.model { display: block; width: 100%; height: 100%; }
.label { fill: #8e5f40; font: 10px "Liberation Mono", monospace; }
.mark { position: absolute; right: 5px; bottom: 5px; width: 206px; height: 62px; display: flex; background: #b0c6e1; }
.mark svg { width: 58px; height: 62px; }
.mark div { flex: 1; display: flex; flex-direction: column; }
.mark strong { padding-left: 12px; color: #4fa58e; font: 900 29px/40px "Noto Sans CJK SC", sans-serif; }
.mark span { color: #8aa6cb; font: 15px/20px "Open Sans", sans-serif; }
```
